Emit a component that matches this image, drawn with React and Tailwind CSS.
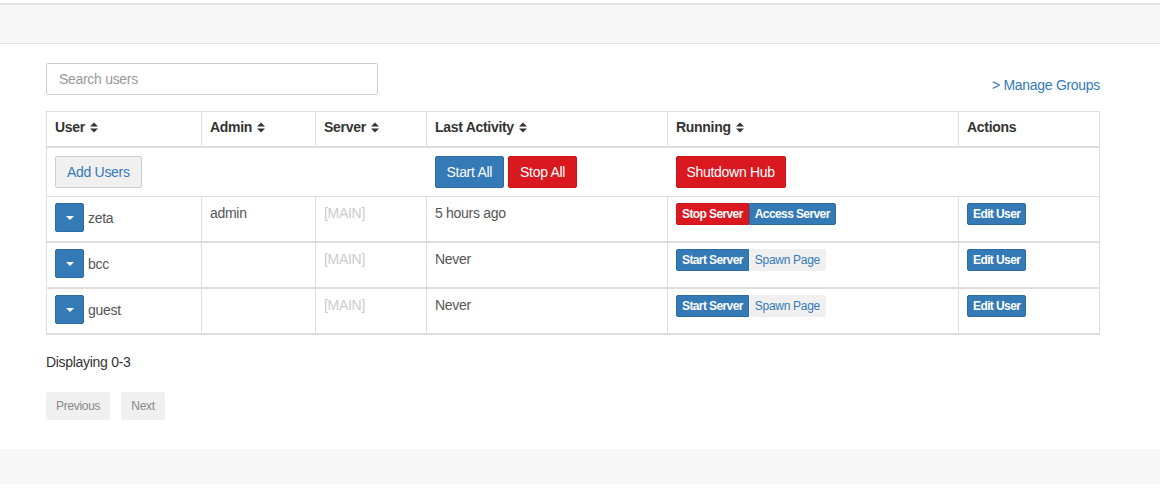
import React from 'react';

const users = [
  { name: 'zeta', admin: 'admin', last: '5 hours ago', running: true },
  { name: 'bcc', admin: '', last: 'Never', running: false },
  { name: 'guest', admin: '', last: 'Never', running: false },
];

function SortIcon() {
  return (
    <svg className="inline-block ml-[5px] w-[8px] h-[11px] align-[-1px]" viewBox="0 0 8 11" fill="#333">
      <path d="M0 4.5 L4 0.5 L8 4.5 Z" />
      <path d="M0 6.5 L4 10.5 L8 6.5 Z" />
    </svg>
  );
}

function Caret() {
  return (
    <svg className="w-[8px] h-[4px]" viewBox="0 0 8 4" fill="#fff">
      <path d="M0 0 L8 0 L4 4 Z" />
    </svg>
  );
}

const th = 'px-2 pt-[5px] pb-[9px] text-left font-bold text-[#333] border border-[#ddd] border-b-2';
const td = 'px-2 pt-[6px] pb-[9px] align-top border-x border-[#ddd]';
const xs = 'h-[22px] px-[5px] text-[12px] leading-[18px] border';
const xsBold = xs + ' font-bold tracking-[-0.6px] text-white';

export default function App() {
  return (
    <div className="min-h-screen bg-white text-[14px] leading-[20px] tracking-[-0.3px] text-[#333]" style={{ fontFamily: '"Liberation Sans", Arial, sans-serif' }}>
      <div className="mt-[3px] h-[41px] border-t-2 border-b border-[#e3e3e3] bg-[#f7f7f7]" />

      <div className="ml-[46px] w-[1054px] pt-[19px]">
        <div className="flex items-end justify-between">
          <input
            type="text"
            placeholder="Search users"
            className="w-[332px] h-[32px] px-3 border border-[#ccc] rounded-[2px] text-[14px] placeholder:text-[#999] outline-none"
          />
          <a className="text-[#337ab7] leading-[20px]">&gt; Manage Groups</a>
        </div>

        <table className="mt-[16px] w-full table-fixed border-collapse border border-[#ddd]">
          <colgroup>
            <col className="w-[155px]" />
            <col className="w-[114px]" />
            <col className="w-[111px]" />
            <col className="w-[241px]" />
            <col className="w-[291px]" />
            <col />
          </colgroup>
          <thead>
            <tr>
              <th className={th}>User<SortIcon /></th>
              <th className={th}>Admin<SortIcon /></th>
              <th className={th}>Server<SortIcon /></th>
              <th className={th}>Last Activity<SortIcon /></th>
              <th className={th}>Running<SortIcon /></th>
              <th className={th}>Actions</th>
            </tr>
          </thead>
          <tbody>
            <tr className="border-b border-[#ddd]">
              <td colSpan={3} className="px-2 py-2 align-top">
                <button className="h-[32px] px-[11px] bg-[#f0f0f0] border border-[#ccc] rounded-[2px] text-[#337ab7]">Add Users</button>
              </td>
              <td className="px-2 py-2 align-top">
                <div className="flex gap-1">
                  <button className="h-[32px] px-[11px] bg-[#337ab7] border border-[#2e6da4] rounded-[2px] text-white">Start All</button>
                  <button className="h-[32px] px-[11px] bg-[#d9181f] border border-[#c9151b] rounded-[2px] text-white">Stop All</button>
                </div>
              </td>
              <td colSpan={2} className="px-2 py-2 align-top">
                <button className="h-[32px] px-[10px] bg-[#d9181f] border border-[#c9151b] rounded-[2px] text-white">Shutdown Hub</button>
              </td>
            </tr>
          </tbody>
          {users.map((u, i) => (
            <tbody key={u.name}>
              <tr className={(i === 0 ? '' : 'border-t-2 border-[#ddd] ') + (i === users.length - 1 ? 'border-b-2 border-[#ddd]' : '')}>
                <td className={td}>
                  <div className="flex items-center gap-1">
                    <button className="w-[29px] h-[29px] flex items-center justify-center bg-[#337ab7] border border-[#2e6da4] rounded-[2px]">
                      <Caret />
                    </button>
                    <span className="text-[#555]">{u.name}</span>
                  </div>
                </td>
                <td className={td + ' text-[#555]'}>{u.admin}</td>
                <td className={td + ' text-[#ccc]'}>[MAIN]</td>
                <td className={td + ' text-[#555]'}>{u.last}</td>
                <td className={td}>
                  <div className="flex">
                    {u.running ? (
                      <>
                        <button className={xsBold + ' bg-[#d9181f] border-[#c9151b] rounded-l-[2px]'}>Stop Server</button>
                        <button className={xsBold + ' bg-[#337ab7] border-[#2e6da4] rounded-r-[2px]'}>Access Server</button>
                      </>
                    ) : (
                      <>
                        <button className={xsBold + ' bg-[#337ab7] border-[#2e6da4] rounded-l-[2px]'}>Start Server</button>
                        <button className={xs + ' bg-[#f0f0f0] border-[#f0f0f0] rounded-r-[2px] text-[#337ab7]'}>Spawn Page</button>
                      </>
                    )}
                  </div>
                </td>
                <td className={td}>
                  <button className={xsBold + ' bg-[#337ab7] border-[#2e6da4] rounded-[2px]'}>Edit User</button>
                </td>
              </tr>
            </tbody>
          ))}
        </table>

        <p className="mt-[17px]">Displaying 0-3</p>

        <div className="mt-[20px] flex gap-[11px]">
          <button className="h-[28px] px-[10px] bg-[#f0f0f0] rounded-[2px] text-[12px] text-[#888]">Previous</button>
          <button className="h-[28px] px-[10px] bg-[#f0f0f0] rounded-[2px] text-[12px] text-[#888]">Next</button>
        </div>
      </div>

      <div className="mt-[29px] h-[35px] bg-[#f7f7f7]" />
    </div>
  );
}
